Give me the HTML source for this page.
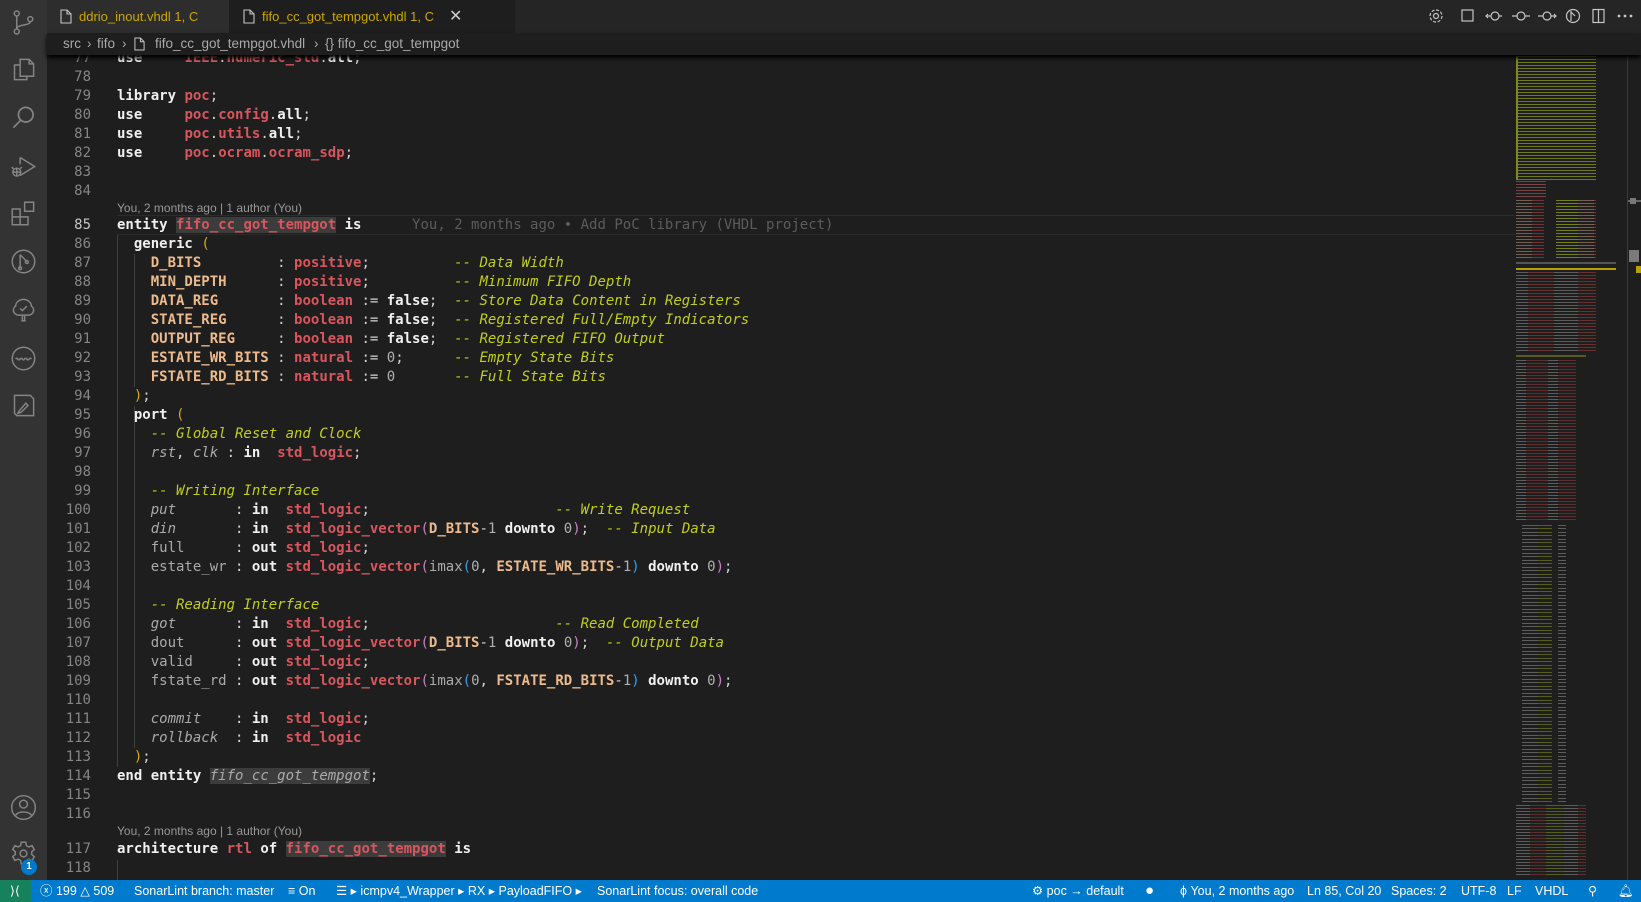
<!DOCTYPE html>
<html><head><meta charset="utf-8">
<style>
*{margin:0;padding:0;box-sizing:border-box}
body{width:1641px;height:902px;background:#1e1e1e;overflow:hidden;position:relative;font-family:"Liberation Sans","DejaVu Sans",sans-serif}
.ab{position:absolute;left:0;top:0;width:47px;height:880px;background:#333333}
.ab svg{position:absolute;left:10px;width:27px;height:27px}
.tabs{position:absolute;left:47px;top:0;width:1594px;height:33px;background:#252526}
.tab{position:absolute;top:0;height:33px;font-size:13px;color:#cca700;line-height:33px}
.bc{position:absolute;left:47px;top:33px;width:1594px;height:22px;background:#1e1e1e;font-size:13.5px;color:#a9a9a9;line-height:22px;box-shadow:0 3px 4px #000;z-index:3}
.code{position:absolute;left:0;top:48.5px;width:1515px;font-family:"DejaVu Sans Mono","Liberation Mono",monospace;font-size:14px}
.l{height:19px;line-height:19px;position:relative;white-space:pre}
.n{position:absolute;width:60px;text-align:right;color:#858585;font-weight:normal;left:31px}
.c{position:absolute;left:117px;color:#d4d4d4}
.lens{height:15.5px;line-height:15px;font-size:12px;color:#999;padding-left:117px;font-family:"Liberation Sans",sans-serif}
.k{color:#f0f0f0;font-weight:bold}
.t{color:#d9565e;font-weight:bold}
.o{color:#ecba8c;font-weight:bold}
.cm{color:#c2cf1a;font-style:italic}
.p{color:#aaaaaa}
.pi{color:#aaaaaa;font-style:italic}
.g{color:#d9a71a}
.pu{color:#c586c0}
.bl{color:#3b9ee8}
.num{color:#b0b0b0}
.hl{background:#3c3c3c}
.ig{position:absolute;width:1px;background:#404040}
.sb{position:absolute;left:0;top:880px;width:1641px;height:22px;background:#007acc;color:#fff;font-size:12.5px;line-height:22px}
.sb span{position:absolute;top:0;white-space:pre}
.mm{position:absolute;left:1516px}
</style></head><body>
<div class="ab">
<svg style="top:9px" viewBox="0 0 24 24" fill="none" stroke="#858585" stroke-width="1.3"><circle cx="6" cy="4" r="2.2"/><circle cx="6" cy="20" r="2.2"/><circle cx="18" cy="9" r="2.2"/><path d="M6 6.2v11.6M18 11.2c0 4-12 2-12 6.6"/></svg>
<svg style="top:56px" viewBox="0 0 24 24" fill="none" stroke="#858585" stroke-width="1.3"><path d="M9 3h8l4 4v11H9z M17 3v4h4 M15 18v3H4V8h5"/></svg>
<svg style="top:104px" viewBox="0 0 24 24" fill="none" stroke="#858585" stroke-width="1.5"><circle cx="14" cy="9.5" r="6.5"/><path d="M9.5 14.5L3 21"/></svg>
<svg style="top:153px" viewBox="0 0 24 24" fill="none" stroke="#858585" stroke-width="1.3"><path d="M9 4l13 8-13 8M9 4v6"/><circle cx="6" cy="17" r="3.5"/><path d="M2 17h8M6 13.5v7M3 14l-1.5-1.5M9 14l1.5-1.5"/></svg>
<svg style="top:200px" viewBox="0 0 24 24" fill="none" stroke="#858585" stroke-width="1.3"><path d="M2 8h7v7h7v7H2z M2 15h7v7 M13 2h8v8h-8z"/></svg>
<svg style="top:248px" viewBox="0 0 24 24" fill="none" stroke="#858585" stroke-width="1.3"><circle cx="12" cy="12" r="10"/><path d="M9 6v12M9 6l6 6"/><circle cx="9" cy="18" r="1.3"/><circle cx="15" cy="12.5" r="1.3"/></svg>
<svg style="top:296px" viewBox="0 0 24 24" fill="none" stroke="#858585" stroke-width="1.3"><path d="M10 22h4M11 22v-5h2v5M8 17c-3 0-5-2-5-4.5 0-1.5 1-3 2-3.5C5 6 8 3 12 3s7 3 7 6c1 .5 2 2 2 3.5 0 2.5-2 4.5-5 4.5z M9 11l2 2 4-4"/></svg>
<svg style="top:345px" viewBox="0 0 24 24" fill="none" stroke="#858585" stroke-width="1.3"><circle cx="12" cy="12" r="10"/><path d="M5 12.5q1-1.5 2 0t2 0 2 0 2 0 2 0 2 0 2 0"/></svg>
<svg style="top:392px" viewBox="0 0 24 24" fill="none" stroke="#858585" stroke-width="1.3"><path d="M4 3h14l3 3v15H6l-2-2z M8 17l6-7 2 2-6 6-3 1z"/></svg>
<svg style="top:794px" viewBox="0 0 24 24" fill="none" stroke="#858585" stroke-width="1.3"><circle cx="12" cy="12" r="10.5"/><circle cx="12" cy="9" r="3.5"/><path d="M5 19c2-4 12-4 14 0"/></svg>
<svg style="top:840px" viewBox="0 0 24 24" fill="none" stroke="#858585" stroke-width="1.3"><circle cx="12" cy="12" r="3"/><path d="M10 2h4l.6 3 2.2 1.2 2.8-1.2 2 3.4-2.3 2v2.4l2.3 2-2 3.4-2.8-1.2-2.2 1.2-.6 3h-4l-.6-3-2.2-1.2-2.8 1.2-2-3.4 2.3-2v-2.4l-2.3-2 2-3.4 2.8 1.2L9.4 5z"/></svg>
<div style="position:absolute;left:21px;top:859px;width:16px;height:16px;border-radius:8px;background:#007acc;color:#fff;font-size:10px;text-align:center;line-height:16px;font-weight:bold">1</div>
</div>
<div class="tabs">
<div class="tab" style="left:0;width:182px;background:#2d2d2d"><svg style="position:absolute;left:13px;top:9px" width="12" height="15" viewBox="0 0 12 15" fill="none" stroke="#c5c5c5" stroke-width="1.1"><path d="M1 1h6l4 4v9H1z M7 1v4h4"/></svg><span style="position:absolute;left:32px">ddrio_inout.vhdl 1, C</span></div>
<div class="tab" style="left:182px;width:286px;background:#1e1e1e"><svg style="position:absolute;left:14px;top:9px" width="12" height="15" viewBox="0 0 12 15" fill="none" stroke="#c5c5c5" stroke-width="1.1"><path d="M1 1h6l4 4v9H1z M7 1v4h4"/></svg><span style="position:absolute;left:33px">fifo_cc_got_tempgot.vhdl 1, C</span><span style="position:absolute;left:220px;color:#ccc;font-size:16px">✕</span></div>
<svg style="position:absolute;left:1380px;top:8px" width="215" height="18" viewBox="0 0 215 18" fill="none" stroke="#c5c5c5" stroke-width="1.2">
<circle cx="9" cy="8" r="2.5"/><circle cx="9" cy="8" r="6" stroke-dasharray="3 1.7"/>
<rect x="35" y="2" width="11" height="11"/>
<circle cx="68" cy="8" r="4"/><path d="M64 8h-5M61 6l-2 2 2 2M72 8h3"/>
<circle cx="94" cy="8" r="4"/><path d="M85 8h5M98 8h5"/>
<circle cx="120" cy="8" r="4"/><path d="M111 8h5M124 8h5M127 6l2 2-2 2"/>
<circle cx="146" cy="8" r="6.5"/><path d="M144 3v10M144 4l4 4"/>
<rect x="166" y="1.5" width="11" height="13"/><path d="M171.5 1.5v13"/>
<circle cx="192" cy="8" r=".8" fill="#c5c5c5"/><circle cx="198" cy="8" r=".8" fill="#c5c5c5"/><circle cx="204" cy="8" r=".8" fill="#c5c5c5"/>
</svg>
</div>
<div class="bc"><span style="position:absolute;left:16px">src</span><span style="position:absolute;left:40px">›</span><span style="position:absolute;left:50px">fifo</span><span style="position:absolute;left:75px">›</span><svg style="position:absolute;left:87px;top:4px" width="11" height="14" viewBox="0 0 12 15" fill="none" stroke="#c5c5c5" stroke-width="1.1"><path d="M1 1h6l4 4v9H1z M7 1v4h4"/></svg><span style="position:absolute;left:108px">fifo_cc_got_tempgot.vhdl</span><span style="position:absolute;left:267px">›</span><span style="position:absolute;left:278px">{} fifo_cc_got_tempgot</span></div>

<div class="ig" style="left:117px;top:235px;height:532px"></div>
<div class="ig" style="left:134px;top:254px;height:133px"></div>
<div class="ig" style="left:134px;top:406px;height:342px"></div>
<div style="position:absolute;left:117px;top:215px;width:1398px;height:20px;border-top:1px solid #2c2c2c;border-bottom:1px solid #2c2c2c"></div>
<div class="ig" style="left:117px;top:860px;height:20px"></div>

<div class="code">
<div class="l"><span class="n">77</span><span class="c"><span class="k">use</span>     <span class="t">IEEE</span>.<span class="t">numeric_std</span>.<span class="k">all</span>;</span></div>
<div class="l"><span class="n">78</span></div>
<div class="l"><span class="n">79</span><span class="c"><span class="k">library</span> <span class="t">poc</span>;</span></div>
<div class="l"><span class="n">80</span><span class="c"><span class="k">use</span>     <span class="t">poc</span>.<span class="t">config</span>.<span class="k">all</span>;</span></div>
<div class="l"><span class="n">81</span><span class="c"><span class="k">use</span>     <span class="t">poc</span>.<span class="t">utils</span>.<span class="k">all</span>;</span></div>
<div class="l"><span class="n">82</span><span class="c"><span class="k">use</span>     <span class="t">poc</span>.<span class="t">ocram</span>.<span class="t">ocram_sdp</span>;</span></div>
<div class="l"><span class="n">83</span></div>
<div class="l"><span class="n">84</span></div>
<div class="lens">You, 2 months ago | 1 author (You)</div>
<div class="l"><span class="n" style="color:#c6c6c6">85</span><span class="c"><span class="k">entity</span> <span class="t hl">fifo_cc_got_tempgot</span> <span class="k">is</span>      <span style="color:#5c5c5c">You, 2 months ago • Add PoC library (VHDL project)</span></span></div>
<div class="l"><span class="n">86</span><span class="c">  <span class="k">generic</span> <span class="g">(</span></span></div>
<div class="l"><span class="n">87</span><span class="c">    <span class="o">D_BITS</span>         : <span class="t">positive</span>;          <span class="cm">-- Data Width</span></span></div>
<div class="l"><span class="n">88</span><span class="c">    <span class="o">MIN_DEPTH</span>      : <span class="t">positive</span>;          <span class="cm">-- Minimum FIFO Depth</span></span></div>
<div class="l"><span class="n">89</span><span class="c">    <span class="o">DATA_REG</span>       : <span class="t">boolean</span> := <span class="k">false</span>;  <span class="cm">-- Store Data Content in Registers</span></span></div>
<div class="l"><span class="n">90</span><span class="c">    <span class="o">STATE_REG</span>      : <span class="t">boolean</span> := <span class="k">false</span>;  <span class="cm">-- Registered Full/Empty Indicators</span></span></div>
<div class="l"><span class="n">91</span><span class="c">    <span class="o">OUTPUT_REG</span>     : <span class="t">boolean</span> := <span class="k">false</span>;  <span class="cm">-- Registered FIFO Output</span></span></div>
<div class="l"><span class="n">92</span><span class="c">    <span class="o">ESTATE_WR_BITS</span> : <span class="t">natural</span> := <span class="num">0</span>;      <span class="cm">-- Empty State Bits</span></span></div>
<div class="l"><span class="n">93</span><span class="c">    <span class="o">FSTATE_RD_BITS</span> : <span class="t">natural</span> := <span class="num">0</span>       <span class="cm">-- Full State Bits</span></span></div>
<div class="l"><span class="n">94</span><span class="c">  <span class="g">)</span>;</span></div>
<div class="l"><span class="n">95</span><span class="c">  <span class="k">port</span> <span class="g">(</span></span></div>
<div class="l"><span class="n">96</span><span class="c">    <span class="cm">-- Global Reset and Clock</span></span></div>
<div class="l"><span class="n">97</span><span class="c">    <span class="pi">rst</span>, <span class="pi">clk</span> : <span class="k">in</span>  <span class="t">std_logic</span>;</span></div>
<div class="l"><span class="n">98</span></div>
<div class="l"><span class="n">99</span><span class="c">    <span class="cm">-- Writing Interface</span></span></div>
<div class="l"><span class="n">100</span><span class="c">    <span class="pi">put</span>       : <span class="k">in</span>  <span class="t">std_logic</span>;                      <span class="cm">-- Write Request</span></span></div>
<div class="l"><span class="n">101</span><span class="c">    <span class="pi">din</span>       : <span class="k">in</span>  <span class="t">std_logic_vector</span><span class="pu">(</span><span class="o">D_BITS</span>-<span class="num">1</span> <span class="k">downto</span> <span class="num">0</span><span class="pu">)</span>;  <span class="cm">-- Input Data</span></span></div>
<div class="l"><span class="n">102</span><span class="c">    <span class="p">full</span>      : <span class="k">out</span> <span class="t">std_logic</span>;</span></div>
<div class="l"><span class="n">103</span><span class="c">    <span class="p">estate_wr</span> : <span class="k">out</span> <span class="t">std_logic_vector</span><span class="pu">(</span><span class="p">imax</span><span class="bl">(</span><span class="num">0</span>, <span class="o">ESTATE_WR_BITS</span>-<span class="num">1</span><span class="bl">)</span> <span class="k">downto</span> <span class="num">0</span><span class="pu">)</span>;</span></div>
<div class="l"><span class="n">104</span></div>
<div class="l"><span class="n">105</span><span class="c">    <span class="cm">-- Reading Interface</span></span></div>
<div class="l"><span class="n">106</span><span class="c">    <span class="pi">got</span>       : <span class="k">in</span>  <span class="t">std_logic</span>;                      <span class="cm">-- Read Completed</span></span></div>
<div class="l"><span class="n">107</span><span class="c">    <span class="p">dout</span>      : <span class="k">out</span> <span class="t">std_logic_vector</span><span class="pu">(</span><span class="o">D_BITS</span>-<span class="num">1</span> <span class="k">downto</span> <span class="num">0</span><span class="pu">)</span>;  <span class="cm">-- Output Data</span></span></div>
<div class="l"><span class="n">108</span><span class="c">    <span class="p">valid</span>     : <span class="k">out</span> <span class="t">std_logic</span>;</span></div>
<div class="l"><span class="n">109</span><span class="c">    <span class="p">fstate_rd</span> : <span class="k">out</span> <span class="t">std_logic_vector</span><span class="pu">(</span><span class="p">imax</span><span class="bl">(</span><span class="num">0</span>, <span class="o">FSTATE_RD_BITS</span>-<span class="num">1</span><span class="bl">)</span> <span class="k">downto</span> <span class="num">0</span><span class="pu">)</span>;</span></div>
<div class="l"><span class="n">110</span></div>
<div class="l"><span class="n">111</span><span class="c">    <span class="pi">commit</span>    : <span class="k">in</span>  <span class="t">std_logic</span>;</span></div>
<div class="l"><span class="n">112</span><span class="c">    <span class="pi">rollback</span>  : <span class="k">in</span>  <span class="t">std_logic</span></span></div>
<div class="l"><span class="n">113</span><span class="c">  <span class="g">)</span>;</span></div>
<div class="l"><span class="n">114</span><span class="c"><span class="k">end</span> <span class="k">entity</span> <span class="pi hl">fifo_cc_got_tempgot</span>;</span></div>
<div class="l"><span class="n">115</span></div>
<div class="l"><span class="n">116</span></div>
<div class="lens">You, 2 months ago | 1 author (You)</div>
<div class="l"><span class="n">117</span><span class="c"><span class="k">architecture</span> <span class="t">rtl</span> <span class="k">of</span> <span class="t hl">fifo_cc_got_tempgot</span> <span class="k">is</span></span></div>
<div class="l"><span class="n">118</span></div>
</div>

<div class="mm" style="top:56px;width:80px;height:124px;background:repeating-linear-gradient(#8a9a1a 0 1px,transparent 1px 3px);opacity:.75"></div>
<div class="mm" style="top:56px;width:2px;height:124px;background:#7d8a20"></div>
<div class="mm" style="top:181px;width:30px;height:16px;background:repeating-linear-gradient(#7a4444 0 1px,transparent 1px 3px)"></div>
<div class="mm" style="top:200px;width:80px;height:60px;background:repeating-linear-gradient(90deg,#8a7060 0 16px,#8a3838 16px 28px,transparent 28px 40px,#8a9a1a 40px 62px,transparent 62px);-webkit-mask:repeating-linear-gradient(#000 0 1px,transparent 1px 3px);opacity:.8"></div>
<div class="mm" style="top:262px;width:100px;height:2px;background:#555"></div>
<div class="mm" style="top:268px;width:100px;height:2px;background:#b8a000"></div>
<div class="mm" style="top:272px;width:80px;height:80px;background:repeating-linear-gradient(90deg,#777 0 12px,#8a3838 12px 38px,#777 38px 50px,transparent 50px);-webkit-mask:repeating-linear-gradient(#000 0 1px,transparent 1px 3px);opacity:.7"></div>
<div class="mm" style="top:355px;width:70px;height:2px;background:#5a5a20"></div>
<div class="mm" style="top:360px;width:60px;height:160px;background:repeating-linear-gradient(90deg,#888 0 10px,#8a3838 10px 32px,transparent 32px);-webkit-mask:repeating-linear-gradient(#000 0 1px,transparent 1px 3px);opacity:.6"></div>
<div class="mm" style="top:525px;width:50px;height:280px;background:repeating-linear-gradient(90deg,transparent 0 6px,#888 6px 22px,#7a8a20 22px 36px,transparent 36px);-webkit-mask:repeating-linear-gradient(#000 0 1px,transparent 1px 3px,#000 3px 4px,transparent 4px 7px);opacity:.6"></div>
<div class="mm" style="top:805px;width:70px;height:72px;background:repeating-linear-gradient(90deg,#888 0 14px,#8a3838 14px 30px,#7a8a20 30px 48px,transparent 48px);-webkit-mask:repeating-linear-gradient(#000 0 1px,transparent 1px 3px);opacity:.6"></div>
<div style="position:absolute;left:1627px;top:55px;width:1px;height:825px;background:#3a3a3a"></div>
<div style="position:absolute;left:1628px;top:200px;width:13px;height:2px;background:#666"></div>
<div style="position:absolute;left:1630px;top:198px;width:6px;height:6px;background:#777"></div>
<div style="position:absolute;left:1629px;top:250px;width:10px;height:12px;background:#7a7a7a"></div>
<div style="position:absolute;left:1636px;top:266px;width:5px;height:7px;background:#b8a000"></div>

<div class="sb">
<div style="position:absolute;left:0;top:0;width:31px;height:22px;background:#16825d"></div>
<span style="left:10px">⟩⟨</span>
<span style="left:40px">ⓧ 199 △ 509</span>
<span style="left:134px">SonarLint branch: master</span>
<span style="left:288px">≡ On</span>
<span style="left:336px">☰ ▸ icmpv4_Wrapper ▸ RX ▸ PayloadFIFO ▸</span>
<span style="left:597px">SonarLint focus: overall code</span>
<span style="left:1032px">⚙ poc → default</span>
<span style="left:1145px;font-size:15px">●</span>
<span style="left:1180px">ϕ You, 2 months ago</span>
<span style="left:1307px">Ln 85, Col 20</span>
<span style="left:1391px">Spaces: 2</span>
<span style="left:1461px">UTF-8</span>
<span style="left:1507px">LF</span>
<span style="left:1535px">VHDL</span>
<span style="left:1588px">⚲</span>
<span style="left:1618px">🔔︎</span>
</div>
</body></html>
